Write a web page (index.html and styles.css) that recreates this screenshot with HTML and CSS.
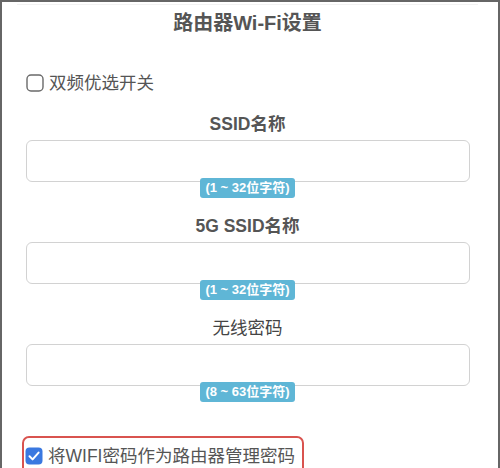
FILE: index.html
```html
<!DOCTYPE html>
<html lang="zh-CN">
<head>
    <meta charset="UTF-8">
    <meta name="viewport" content="width=device-width, initial-scale=1.0">
    <title>路由器Wi-Fi设置</title>
    <link rel="stylesheet" href="styles.css">
</head>
<body>
    <div class="page">
        <h2 class="title">路由器Wi-Fi设置</h2>

        <label class="check-row">
            <svg class="box" width="18" height="18" viewBox="0 0 18 18">
                <rect x="1" y="1" width="16" height="16" rx="4" fill="#fff" stroke="#6a6a6a" stroke-width="1.4"/>
            </svg>
            <span>双频优选开关</span>
        </label>

        <div class="field">
            <div class="field-label">SSID名称</div>
            <div class="input"></div>
            <span class="badge">(1 ~ 32位字符)</span>
        </div>

        <div class="field">
            <div class="field-label">5G SSID名称</div>
            <div class="input"></div>
            <span class="badge">(1 ~ 32位字符)</span>
        </div>

        <div class="field">
            <div class="field-label light">无线密码</div>
            <div class="input"></div>
            <span class="badge">(8 ~ 63位字符)</span>
        </div>

        <div class="highlight">
            <label class="check-row">
                <svg class="box" width="18" height="18" viewBox="0 0 18 18">
                    <rect x="0.5" y="0.5" width="17" height="17" rx="4" fill="#3a78e0"/>
                    <path d="M4.5 9.3 L7.6 12.4 L13.6 5.6" fill="none" stroke="#fff" stroke-width="2" stroke-linecap="round" stroke-linejoin="round"/>
                </svg>
                <span>将WIFI密码作为路由器管理密码</span>
            </label>
        </div>
    </div>
</body>
</html>
```

FILE: styles.css
```css
html, body {
    margin: 0;
    height: 100%;
    background: #fff;
}

body {
    font-family: "Liberation Sans", "Noto Sans CJK SC", sans-serif;
    color: #555;
    overflow: hidden;
}

.page {
    box-sizing: border-box;
    height: 100%;
    border: 2px solid #666;
    border-bottom: none;
    padding: 0 28px 0 23px;
}

.title {
    margin: 2px -8px 0;
    padding-top: 3px;
    border-top: 1px solid #f2f2f2;
    font-size: 20px;
    line-height: 30px;
    font-weight: bold;
    text-align: center;
    color: #555;
}

.check-row {
    display: flex;
    align-items: center;
    gap: 5px;
    font-size: 17.5px;
    line-height: 24px;
    color: #555;
}

.page > .check-row {
    margin-top: 33px;
    margin-left: 1px;
}

.box {
    flex-shrink: 0;
}

.field {
    display: flex;
    flex-direction: column;
    align-items: center;
    margin-top: 17px;
}

.field + .field {
    margin-top: 16px;
}

.field-label {
    font-size: 17.5px;
    line-height: 24px;
    font-weight: bold;
    margin-bottom: 4px;
}

.field-label.light {
    font-weight: normal;
    color: #444;
}

.input {
    box-sizing: border-box;
    align-self: stretch;
    margin-left: 1px;
    height: 42px;
    border: 1.5px solid #d2d2d2;
    border-radius: 6px;
    background: #fff;
}

.badge {
    position: relative;
    margin-top: -4px;
    padding: 0 5px;
    height: 20px;
    line-height: 20px;
    border-radius: 3px;
    background: #5fb6d6;
    color: #fff;
    font-size: 13px;
    font-weight: bold;
}

.highlight {
    display: inline-flex;
    margin-top: 34px;
    margin-left: -3px;
    padding: 6px 7px 6px 1px;
    border: 2.5px solid #d9534f;
    border-radius: 7px;
}
```
